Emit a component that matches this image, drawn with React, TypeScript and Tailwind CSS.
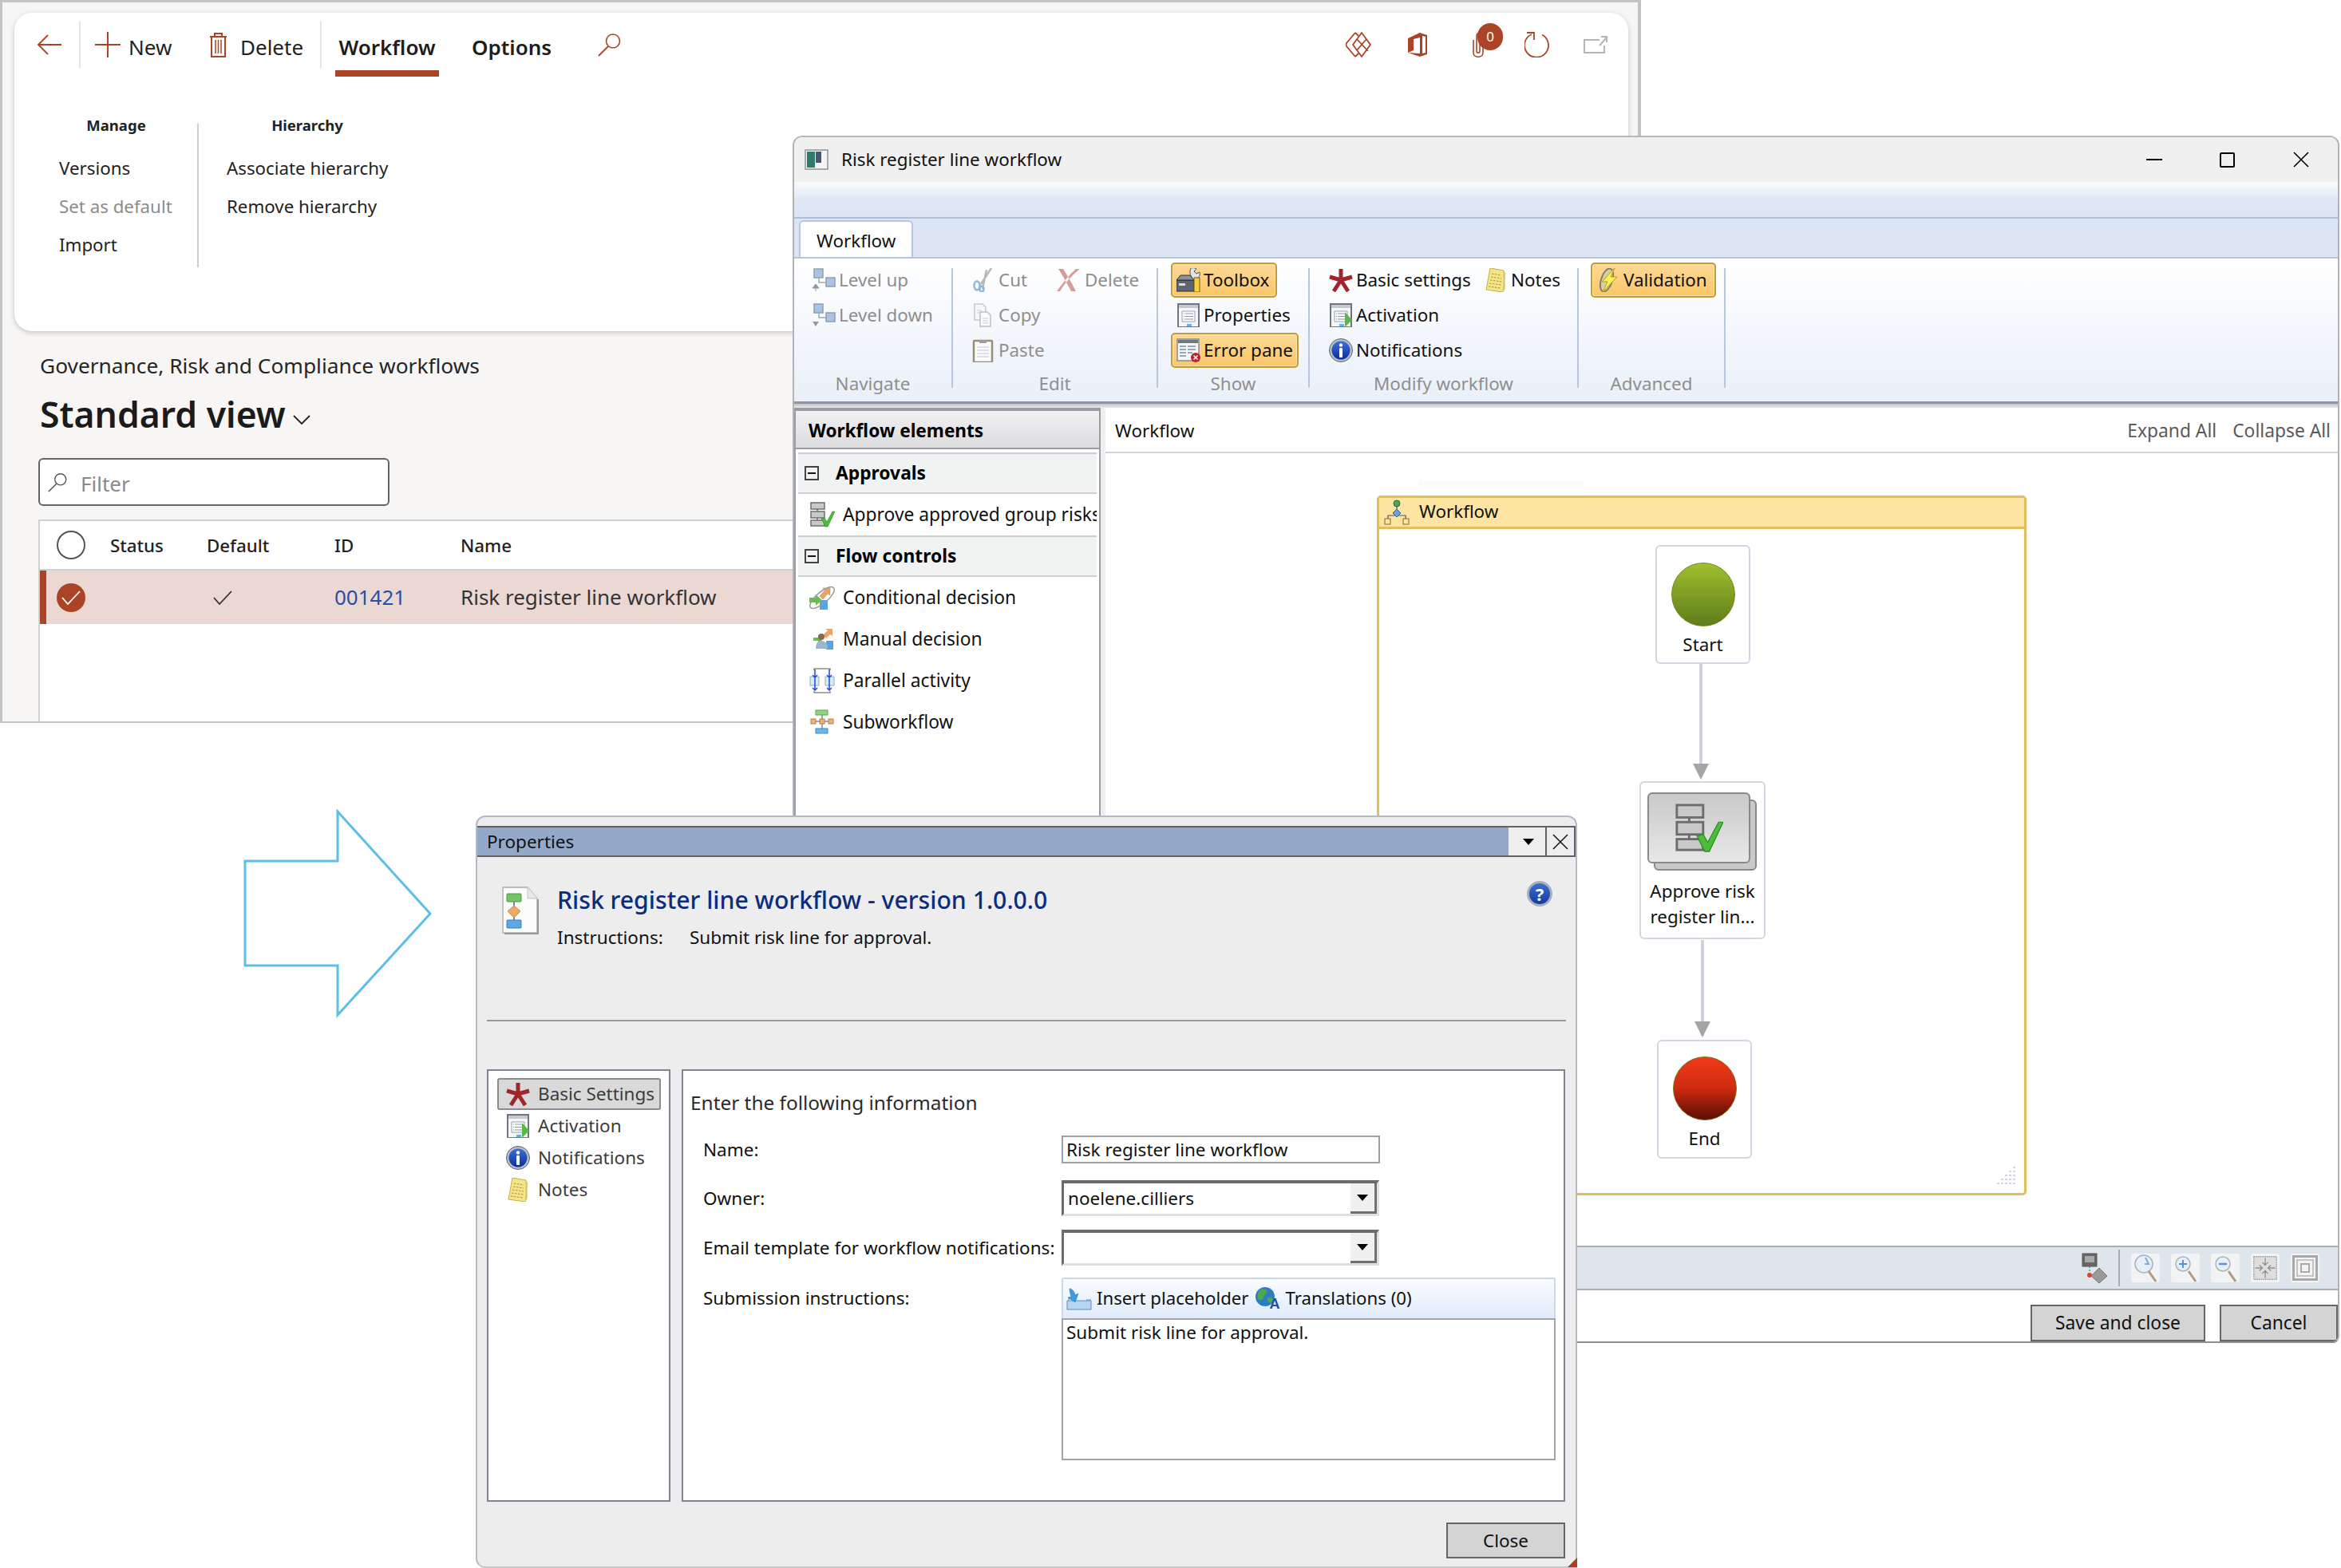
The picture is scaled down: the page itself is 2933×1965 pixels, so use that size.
import React from "react";

type IP = { className?: string };
const S = ({ children, className = "", vb = "0 0 30 30" }: { children: React.ReactNode; className?: string; vb?: string }) => (
  <svg viewBox={vb} className={`shrink-0 ${className}`} fill="none">{children}</svg>
);
const RED = "#ab4426";

const BackArrow = () => (
  <S vb="0 0 32 28" className="w-[32px] h-[28px]"><path d="M31 14H2M14 2 2 14l12 12" stroke={RED} strokeWidth="1.8" /></S>
);
const PlusI = () => (
  <S vb="0 0 32 32" className="w-[32px] h-[32px]"><path d="M16 0v32M0 16h32" stroke={RED} strokeWidth="2" /></S>
);
const TrashI = () => (
  <S vb="0 0 25 33" className="w-[25px] h-[33px]">
    <path d="M2 6h21M8 6V2h9v4M4 6v25h17V6" stroke={RED} strokeWidth="2" />
    <path d="M9 10v17M12.500 10v17M16 10v17" stroke={RED} strokeWidth="1.5" />
  </S>
);
const SearchI = ({ className = "w-[29px] h-[30px]", c = RED }: IP & { c?: string }) => (
  <S vb="0 0 29 30" className={className}>
    <circle cx="19" cy="10.500" r="8.500" stroke={c} strokeWidth="1.600" />
    <path d="M13 17 1 29" stroke={c} strokeWidth="1.800" />
  </S>
);
const DiamondI = () => (
  <S vb="0 0 32 32" className="w-[32px] h-[32px]">
    <path d="M12 1 1 14q-1 2 0 4l11 13 M12 1l4 4 M12 31l4-4" stroke={RED} strokeWidth="1.800" />
    <path d="M20 1 9 16l11 15 11-15zM14 9l14 15M26 9 14 23" stroke={RED} strokeWidth="1.800" strokeLinejoin="round" />
  </S>
);
const OfficeI = () => (
  <S vb="0 0 24 30" className="w-[24px] h-[30px]">
    <path d="M0 7 15 0l9 3v24l-9 3-15-5 15 1V6L7 8v14l-7 3z" fill={RED} />
    <path d="M18 4v22l4-1V5z" fill="#fff" />
  </S>
);
const ClipI = () => (
  <S vb="0 0 16 32" className="w-[16px] h-[32px]">
    <path d="M2 10v16c0 7 12 7 12 0V5c0-5-8-5-8 0v19c0 3 4 3 4 0V8" stroke={RED} strokeWidth="1.600" />
  </S>
);
const RefreshI = () => (
  <S vb="0 0 32 32" className="w-[32px] h-[32px]">
    <path d="M22 3.500A15 15 0 1 1 9 3" stroke={RED} strokeWidth="1.800" />
    <path d="M3 1h9v9" stroke={RED} strokeWidth="1.800" />
  </S>
);
const PopI = () => (
  <S vb="0 0 30 22" className="w-[30px] h-[22px]">
    <path d="M20 5H1v16h25V12" stroke="#b5b5b5" strokeWidth="2" />
    <path d="M20 12 29 2M22 1h7v7" stroke="#b5b5b5" strokeWidth="2" />
  </S>
);
const CheckLine = ({ c = "#333" }: { c?: string }) => (
  <S vb="0 0 24 18" className="w-[24px] h-[18px]"><path d="M1 9l7 8L23 1" stroke={c} strokeWidth="1.800" /></S>
);
const Chevron = () => (
  <S vb="0 0 22 12" className="w-[22px] h-[12px]"><path d="M1 1l10 10L21 1" stroke="#222" strokeWidth="1.800" /></S>
);

const TreeI = ({ down }: { down?: boolean }) => (
  <S vb="0 0 30 30" className="w-[30px] h-[30px] opacity-75">
    <rect x="3" y="1" width="11" height="11" fill="#8fb3dc" stroke="#6f7f94" strokeWidth="1.500" />
    <rect x="18" y="12" width="11" height="11" fill="#8fb3dc" stroke="#6f7f94" strokeWidth="1.500" />
    <path d="M9 12v6h9" stroke="#8a8a8a" strokeWidth="1.500" />
    {down ? <path d="M1 23h8l-4 6z" fill="#777" /> : <path d="M5 20l4 5H1zM5 25v4" stroke="#777" fill="#777" />}
  </S>
);
const CutI = () => (
  <S className="w-[30px] h-[30px] opacity-80">
    <path d="M25 0 12 20M19 2l-5 24" stroke="#a8a8a8" strokeWidth="2.500" />
    <ellipse cx="7" cy="22" rx="3.500" ry="5.500" stroke="#6fa5de" strokeWidth="2.500" />
    <ellipse cx="13" cy="26" rx="2.500" ry="3.500" stroke="#6fa5de" strokeWidth="2.500" />
  </S>
);
const RedXI = () => (
  <S vb="0 0 32 30" className="w-[32px] h-[30px]">
    <path d="M3 1c5 8 11 18 16 28h6C20 19 14 9 9 1zM30 1C20 9 11 19 5 29h-4C9 18 17 8 25 1z" fill="#d99a9a" />
  </S>
);
const CopyI = () => (
  <S className="w-[30px] h-[30px] opacity-70">
    <path d="M4 1h10l4 4v16H4z" fill="#f5f7fa" stroke="#b3b3b3" strokeWidth="1.500" />
    <path d="M11 11h9l4 4v14H11z" fill="#fbfbfb" stroke="#a8a8a8" strokeWidth="1.500" />
    <path d="M14 19h7M14 22h7M14 25h7M7 9h6M7 12h3" stroke="#bbb" />
  </S>
);
const PasteI = () => (
  <S className="w-[30px] h-[30px]">
    <rect x="3" y="3" width="23" height="27" rx="1" fill="#fafafa" stroke="#9c8d78" strokeWidth="2.500" />
    <path d="M10 2h9v4h-9z" fill="#9c9c9c" />
    <path d="M7 11h15M7 15h15M7 19h15M7 23h15" stroke="#c4c9d2" />
  </S>
);
const ToolboxI = () => (
  <S className="w-[30px] h-[30px]">
    <path d="M18 0c3-1 5 0 7 1l-3 3 3 3 4-2c1 4-1 8-5 8v6h-5v-8c-2-2-3-8-1-10z" fill="#e4e4e4" stroke="#444" strokeWidth=".9" />
    <path d="M0 15h22v14H0z" fill="#5d6670" stroke="#2e2e2e" />
    <path d="M0 15l5-6h12l5 6z" fill="#8a929b" stroke="#2e2e2e" />
    <rect x="3" y="19" width="8" height="3" fill="#dcdcdc" />
    <rect x="22" y="12" width="7" height="18" fill="#f7cf3f" stroke="#6f5f15" />
  </S>
);
const PropsI = ({ arrow }: { arrow?: boolean }) => (
  <S vb="1 0 28 30" className="w-[30px] h-[30px]">
    <rect x="2" y="1" width="26" height="29" fill="#f4f6f9" stroke="#6f7680" strokeWidth="2" />
    <rect x="3" y="2" width="24" height="4" fill="#c5cad1" />
    <path d="M7 10h16v13H7z" fill="#fff" stroke="#98a0aa" />
    <path d="M11 13h10M11 16.500h10M11 20h10" stroke="#8b95a5" />
    <path d="M9 13h1M9 16.500h1M9 20h1" stroke="#4aa0e0" />
    <rect x="13" y="26" width="6" height="3" fill="#5fb3ea" />
    {arrow && <path d="M20 11l9 10-9 9z" fill="#58b946" />}
  </S>
);
const ErrI = () => (
  <S className="w-[30px] h-[30px]">
    <rect x="1" y="1" width="27" height="27" fill="#f5f6f8" stroke="#8b8b8b" strokeWidth="1.500" />
    <rect x="2" y="2" width="25" height="4" fill="#6e7680" />
    <path d="M4 10h8M14 10h10M4 14h8M14 14h10M4 18h8M14 18h6M4 22h8" stroke="#7b8da8" strokeWidth="1.300" />
    <circle cx="24" cy="24" r="6" fill="#b8222a" />
    <path d="M21.500 21.500l5 5M26.500 21.500l-5 5" stroke="#fff" strokeWidth="1.500" />
  </S>
);
const StarI = () => (
  <S className="w-[30px] h-[30px]">
    <path d="M15 15V1M15 15 29 11M15 15 1 11M15 15 24 29M15 15 6 29" stroke="#a2252c" strokeWidth="5" />
  </S>
);
const NotesI = () => (
  <S className="w-[30px] h-[30px]">
    <path d="M8 0 25 3 26 25 24 30 3 27z" fill="#f6e487" stroke="#c7ad44" />
    <path d="M24 30l1-26 2 2-1 19z" fill="#d8c161" />
    <path d="M10 7 22 9M9 11 22 13M8 15 22 17M7 19 22 21M6 23 21 25" stroke="#a4903e" strokeDasharray="2.500 1.500" />
  </S>
);
const InfoI = ({ id }: { id: string }) => (
  <S className="w-[30px] h-[30px]">
    <defs>
      <linearGradient id={id} x1="0" y1="0" x2="0" y2="1"><stop offset="0" stopColor="#3b6fd8" /><stop offset="1" stopColor="#0d2f9c" /></linearGradient>
    </defs>
    <circle cx="15" cy="15" r="14.500" fill="#b9bec8" stroke="#5c6470" />
    <circle cx="15" cy="15" r="11.500" fill={`url(#${id})`} />
    <circle cx="15" cy="8.500" r="2.200" fill="#fff" />
    <rect x="13" y="12" width="4" height="12" rx="1" fill="#fff" />
  </S>
);
const ValidI = () => (
  <S className="w-[30px] h-[30px]">
    <ellipse cx="13" cy="15" rx="7" ry="15" transform="rotate(18 13 15)" fill="#d9cfa4" stroke="#85806a" strokeWidth="2" />
    <path d="M23 0 7 17h7L8 30 26 11h-8z" fill="#fdf14e" stroke="#b89c1c" />
  </S>
);
const ApproveI = ({ className = "w-[32px] h-[32px]" }: IP) => (
  <S vb="0 0 32 32" className={className}>
    <rect x="2" y="1" width="17" height="8" fill="#c9c9c9" stroke="#6d6d6d" strokeWidth="1.500" />
    <rect x="2" y="12" width="17" height="8" fill="#c9c9c9" stroke="#6d6d6d" strokeWidth="1.500" />
    <rect x="2" y="23" width="17" height="7" fill="#c9c9c9" stroke="#6d6d6d" strokeWidth="1.500" />
    <path d="M10 9v3M10 20v3" stroke="#6d6d6d" strokeWidth="1.500" />
    <path d="M15 21l4-1 3 5 7-13h3l-9 19h-3z" fill="#4cbc3a" stroke="#2b8a25" strokeWidth=".6" />
  </S>
);
const CondI = () => (
  <S vb="0 0 32 32" className="w-[32px] h-[32px] overflow-visible">
    <rect x="13" y="19" width="10" height="12" fill="#4fa6e8" />
    <path d="M13 14 20 6l-3-2h9v9l-3-2-6 7z" fill="#e5a76b" stroke="#c88747" strokeWidth=".6" />
    <path d="M0 16h8v-4l8 7-8 7v-4H0z" fill="#68bd51" />
    <ellipse cx="16" cy="16" rx="19" ry="7" transform="rotate(-40 16 16)" stroke="#9b9b9b" strokeWidth="1.500" />
  </S>
);
const ManualI = () => (
  <S vb="0 0 32 32" className="w-[32px] h-[32px]">
    <path d="M5 14h6v-3l6 5-6 5v-3H5z" fill="#68bd51" />
    <path d="M17 11l6-6-3-2h9v9l-3-2-5 5z" fill="#e5a76b" />
    <rect x="21" y="18" width="9" height="11" fill="#4fa6e8" />
    <circle cx="15" cy="13" r="4" fill="#8a6a48" />
    <path d="M8 28c0-8 4-10 7-10s8 2 8 10z" fill="#9bb4cf" />
  </S>
);
const ParaI = () => (
  <S vb="0 0 32 32" className="w-[32px] h-[32px]">
    <path d="M6 3V1h20v2M6 29v2h20v-2" stroke="#8c8c8c" strokeWidth="1.500" />
    <rect x="1" y="11" width="11" height="11" fill="#d6ecf7" stroke="#9ab" />
    <rect x="20" y="11" width="11" height="11" fill="#d6ecf7" stroke="#9ab" />
    <path d="M7 2v26M25 2v26M4 9l3 3 3-3M22 9l3 3 3-3M4 25l3 3 3-3M22 25l3 3 3-3" stroke="#1f47d6" strokeWidth="1.500" />
  </S>
);
const SubI = () => (
  <S vb="0 0 32 32" className="w-[32px] h-[32px]">
    <path d="M16 6v20M6 15h20" stroke="#7d8a94" strokeWidth="1.500" />
    <rect x="8" y="1" width="15" height="6" fill="#8fd37b" stroke="#5ea64c" />
    <rect x="2" y="12" width="6" height="6" fill="#e9b27e" stroke="#bb804b" />
    <rect x="13" y="12" width="6" height="6" fill="#e9b27e" stroke="#bb804b" />
    <rect x="24" y="12" width="6" height="6" fill="#e9b27e" stroke="#bb804b" />
    <rect x="8" y="24" width="15" height="6" fill="#6db6ec" stroke="#3f89c9" />
  </S>
);
const WfI = () => (
  <S vb="0 0 32 32" className="w-[32px] h-[32px]">
    <path d="M16 8v8M5 25v-5h22v5" stroke="#555" strokeWidth="1.200" />
    <circle cx="16" cy="5" r="4" fill="#4aa85a" stroke="#2b6a36" />
    <path d="M16 12l5 5-5 5-5-5z" fill="#6f9fe0" stroke="#3a5f9e" />
    <rect x="1" y="24" width="7" height="7" fill="#fde4a0" stroke="#8a6a20" />
    <rect x="24" y="24" width="7" height="7" fill="#fde4a0" stroke="#8a6a20" />
  </S>
);
const DocI = () => (
  <S vb="0 0 47 60" className="w-[47px] h-[60px]">
    <path d="M2 1h31l12 14v43H2z" fill="#fbfbfb" stroke="#bdbdbd" strokeWidth="1.800" />
    <path d="M33 1v14h12" fill="#e8e8e8" stroke="#c4c4c4" />
    <path d="M4 59h42V16" stroke="#9a9a9a" strokeWidth="2" />
    <path d="M16 16v30" stroke="#7a8fa0" strokeWidth="2" />
    <rect x="7" y="9" width="18" height="10" rx="1" fill="#74c466" stroke="#4c9b40" />
    <path d="M16 24l8 7-8 8-8-8z" fill="#eeaa66" stroke="#cc8844" />
    <rect x="7" y="42" width="18" height="10" rx="1" fill="#5ea9e4" stroke="#3a7fb8" />
  </S>
);
const InsertI = () => (
  <S vb="0 0 32 28" className="w-[32px] h-[28px]">
    <path d="M1 16h30v11H1z" fill="#b9d4ee" stroke="#5b8fc3" />
    <path d="M3 16v-3h5M25 15h6" stroke="#5b8fc3" />
    <path d="M4 1c3 0 6 3 7 8l4-2-4 11-9-6 4-1C5 7 4 4 4 1z" fill="#3d9be0" stroke="#2a78b8" strokeWidth=".6" />
  </S>
);
const GlobeI = () => (
  <div className="relative w-[33px] h-[32px] shrink-0">
    <S vb="0 0 33 32" className="w-[33px] h-[32px]">
      <circle cx="13" cy="13" r="12" fill="#2e7cc4" />
      <path d="M6 5c4-2 8-2 9 1s-3 4-4 8-6 4-7 1 0-8 2-10zM17 14c3-1 6 0 6 3s-3 5-5 3-3-5-1-6z" fill="#4aa84e" />
    </S>
    <span className="absolute left-[18px] top-[12px] text-[18px] leading-[20px] font-bold text-[#1d4fa8] font-['Liberation_Sans',sans-serif]">A</span>
  </div>
);
const Tri = () => (
  <S vb="0 0 14 8" className="w-[14px] h-[8px]"><path d="M0 0h14L7 8z" fill="#000" /></S>
);
const FlowMini = () => (
  <S vb="0 0 32 40" className="w-[32px] h-[40px]">
    <rect x="1" y="2" width="18" height="16" fill="#666" stroke="#555" />
    <rect x="4" y="5" width="12" height="8" fill="#aaa" />
    <path d="M10 18v8" stroke="#555" strokeDasharray="2 2" />
    <circle cx="10" cy="29" r="3" fill="#e3402a" />
    <path d="M22 20l10 10-10 9-10-9z" fill="#9a9a9a" stroke="#777" />
  </S>
);
const Lens = ({ mode }: { mode: "reset" | "plus" | "minus" }) => (
  <div className="w-[36px] h-[36px] bg-[#f2f3f4] rounded-[3px] flex items-center justify-center">
    <S vb="0 0 36 36" className="w-[36px] h-[36px]">
      <circle cx={mode === "reset" ? 16 : 15} cy="13" r={mode === "reset" ? 11 : 9} fill="#e6f0fa" stroke="#a8b3bd" strokeWidth="1.500" />
      <path d="M22 22l9 13" stroke="#b39a80" strokeWidth="3" />
      {mode === "plus" && <path d="M15 8v10M10 13h10" stroke="#5b90d4" strokeWidth="2" />}
      {mode === "minus" && <path d="M10 13h10" stroke="#5b90d4" strokeWidth="2.500" />}
      {mode === "reset" && <path d="M18 5l4 8-5 0" stroke="#7fa8d8" strokeWidth="2" />}
    </S>
  </div>
);
const FitI = () => (
  <div className="w-[36px] h-[36px] bg-[#f2f3f4] rounded-[3px] flex items-center justify-center">
    <S vb="0 0 36 36" className="w-[32px] h-[32px]">
      <rect x="2" y="2" width="32" height="32" fill="#dedede" stroke="#a3a3a3" strokeWidth="1.500" strokeDasharray="2 1" />
      <path d="M18 4v10M18 32V22M4 18h10M32 18H22M14 10l4 4 4-4M14 26l4-4 4 4M10 14l4 4-4 4M26 14l-4 4 4 4" stroke="#909090" strokeWidth="1.500" />
    </S>
  </div>
);
const FrameI = () => (
  <div className="w-[36px] h-[36px] bg-[#f2f3f4] rounded-[3px] flex items-center justify-center">
    <div className="w-[32px] h-[32px] border-[3px] border-[#a9a9a9] flex items-center justify-center">
      <div className="w-[22px] h-[22px] border-[2px] border-[#c4c4c4] flex items-center justify-center">
        <div className="w-[12px] h-[12px] border-[2px] border-[#a9a9a9]" />
      </div>
    </div>
  </div>
);
const Grip = () => (
  <S vb="0 0 24 24" className="w-[24px] h-[24px]">
    {[[20, 2], [20, 7], [15, 7], [20, 12], [15, 12], [10, 12], [20, 17], [15, 17], [10, 17], [5, 17], [20, 22], [15, 22], [10, 22], [5, 22], [0, 22]].map(([x, y], i) => (
      <rect key={i} x={x} y={y} width="3" height="2" fill="#d3d4e2" />
    ))}
  </S>
);

/* ---------- background page ---------- */
const PageWindow = () => (
  <div className="absolute left-0 top-0 w-[2056px] h-[906px] bg-[#f7f6f4] border-t-[3px] border-l-[3px] border-r-[4px] border-b-[2px] border-[#c4c4c4] flex flex-col overflow-hidden text-[#222]">
    <div className="ml-[15px] mt-[13px] w-[2022px] h-[399px] shrink-0 bg-white rounded-[22px] shadow-[0_2px_6px_rgba(0,0,0,0.2)] flex flex-col">
      <div className="flex h-[80px] shrink-0 pt-[10px] items-start text-[26px] leading-[60px]">
        <div className="ml-[28px] h-[60px] flex items-center"><BackArrow /></div>
        <div className="ml-[21px] w-[2px] h-[60px] bg-[#e6e6e6]" />
        <div className="ml-[18px] h-[60px] flex items-center"><PlusI /></div>
        <div className="ml-[10px] w-[55px] whitespace-nowrap mt-[3px]">New</div>
        <div className="ml-[45px] h-[60px] flex items-center"><TrashI /></div>
        <div className="ml-[15px] w-[78px] whitespace-nowrap mt-[3px]">Delete</div>
        <div className="ml-[22px] w-[2px] h-[60px] bg-[#e6e6e6]" />
        <div className="ml-[17px] w-[130px] h-[70px] border-b-[8px] border-[#ab4426] text-center font-semibold text-[#1d1d1d] whitespace-nowrap pt-[3px]">Workflow</div>
        <div className="ml-[41px] w-[100px] font-semibold text-[#1d1d1d] whitespace-nowrap mt-[3px]">Options</div>
        <div className="ml-[58px] h-[60px] flex items-center"><SearchI /></div>
        <div className="ml-auto mr-[26px] h-[60px] flex items-center">
          <DiamondI />
          <div className="ml-[46px]"><OfficeI /></div>
          <div className="ml-[56px] relative">
            <ClipI />
            <div className="absolute left-[7px] top-[-11px] w-[32px] h-[34px] rounded-full bg-[#ab4426] text-white text-[17px] leading-[33px] text-center">0</div>
          </div>
          <div className="ml-[50px]"><RefreshI /></div>
          <div className="ml-[42px]"><PopI /></div>
        </div>
      </div>
      <div className="flex items-start text-[22.300px]">
        <div className="ml-[56px] w-[143px] mt-[46px] flex flex-col">
          <div className="h-[30px] leading-[30px] text-center text-[18.500px] font-bold text-[#222]">Manage</div>
          <div className="mt-[15px] h-[48px] leading-[48px]">Versions</div>
          <div className="h-[48px] leading-[48px] text-[#8c8c8c] whitespace-nowrap">Set as default</div>
          <div className="h-[48px] leading-[48px]">Import</div>
        </div>
        <div className="ml-[30px] mt-[59px] w-[2px] h-[180px] bg-[#cfcfcf]" />
        <div className="ml-[35px] w-[202px] mt-[46px] flex flex-col">
          <div className="h-[30px] leading-[30px] text-center text-[18.500px] font-bold text-[#222]">Hierarchy</div>
          <div className="mt-[15px] h-[48px] leading-[48px] whitespace-nowrap">Associate hierarchy</div>
          <div className="h-[48px] leading-[48px] whitespace-nowrap">Remove hierarchy</div>
        </div>
      </div>
    </div>
    <div className="pl-[45px] flex flex-col flex-1 min-h-0">
      <div className="ml-[2px] mt-[25px] h-[36px] leading-[36px] text-[26.300px] text-[#252525] whitespace-nowrap">Governance, Risk and Compliance workflows</div>
      <div className="ml-[2px] mt-[15px] h-[56px] flex items-center">
        <div className="text-[44.500px] font-semibold leading-[56px] text-[#1b1b1b] whitespace-nowrap">Standard view</div>
        <div className="ml-[9px] mt-[14px]"><Chevron /></div>
      </div>
      <div className="mt-[27px] w-[440px] h-[60px] shrink-0 bg-white border-[2px] border-[#666] rounded-[6px] flex items-center">
        <div className="ml-[10px]"><SearchI className="w-[24px] h-[25px]" c="#555" /></div>
        <div className="ml-[17px] mt-[5px] text-[26px] text-[#8a8a8a]">Filter</div>
      </div>
      <div className="mt-[17px] flex-1 min-h-0 bg-white border-t-[2px] border-l-[2px] border-[#d0d0d0] text-[22.300px]">
        <div className="grid grid-cols-[88px_121px_160px_158px_1fr] h-[62px] border-b-[2px] border-[#d0d0d0] items-center font-medium text-[#222] leading-[34px]">
          <div className="ml-[21px] w-[36px] h-[36px] rounded-full border-[2px] border-[#555] bg-white" />
          <div className="pt-[2px]">Status</div>
          <div className="pt-[2px]">Default</div>
          <div className="pt-[2px]">ID</div>
          <div className="pt-[2px]">Name</div>
        </div>
        <div className="grid grid-cols-[88px_121px_160px_158px_1fr] h-[67px] bg-[#ecd8d3] items-center text-[26px]">
          <div className="h-full flex items-center border-l-[8px] border-[#ab4426]">
            <div className="ml-[13px] w-[36px] h-[36px] rounded-full bg-[#ab4426] flex items-center justify-center"><CheckLine c="#fff" /></div>
          </div>
          <div />
          <div className="pl-[8px]"><CheckLine /></div>
          <div className="text-[#2a4ea6]">001421</div>
          <div className="text-[#333] whitespace-nowrap">Risk register line workflow</div>
        </div>
      </div>
    </div>
  </div>
);

/* ---------- workflow designer window ---------- */
const RB = ({ icon, text, dim, w }: { icon: React.ReactNode; text: string; dim?: boolean; w?: string }) => (
  <div className={`flex items-center h-[44px] whitespace-nowrap ${dim ? "text-[#8e8e8e]" : "text-[#111]"} ${w ?? ""}`}>
    {icon}
    <span className="ml-[4px] mb-[1px]">{text}</span>
  </div>
);
const HB = ({ icon, text, w }: { icon: React.ReactNode; text: string; w: string }) => (
  <div className={`flex items-center h-[44px] whitespace-nowrap rounded-[5px] border-[2px] border-[#c29c3c] bg-gradient-to-b from-[#fbd896] to-[#fcc765] shadow-[inset_0_0_0_1px_#fde2ae] pl-[5px] text-[#111] ${w}`}>
    {icon}
    <span className="ml-[4px] mb-[1px]">{text}</span>
  </div>
);
const GroupSep = () => <div className="w-[2px] h-[150px] mt-[12px] bg-[#b6c7de] shrink-0" />;
const Group = ({ w, pl, label, children }: { w: string; pl: string; label: string; children: React.ReactNode }) => (
  <div className={`flex flex-col shrink-0 pt-[5px] ${w}`}>
    <div className={`h-[132px] ${pl}`}>{children}</div>
    <div className="h-[40px] leading-[39px] text-center text-[#8f8f8f] whitespace-nowrap">{label}</div>
  </div>
);

const GroupHead = ({ label }: { label: string }) => (
  <div className="mx-[3px] h-[52px] shrink-0 bg-[#f1f3f3] border-y-[2px] border-[#cdced6] flex items-center pl-[8px]">
    <div className="w-[18px] h-[18px] border-[2px] border-[#444] flex items-center justify-center"><div className="w-[10px] h-[2px] bg-[#111]" /></div>
    <div className="ml-[21px] font-bold text-[#000]">{label}</div>
  </div>
);
const ElemRow = ({ icon, label }: { icon: React.ReactNode; label: string }) => (
  <div className="mx-[3px] h-[52px] shrink-0 flex items-center pl-[14px] whitespace-nowrap overflow-hidden">
    {icon}
    <span className="ml-[10px]">{label}</span>
  </div>
);
const DiagramBox = ({ pos, children }: { pos: string; children: React.ReactNode }) => (
  <div className={`absolute bg-white border-[2px] border-[#d2d7e3] rounded-[6px] flex flex-col items-center ${pos}`}>{children}</div>
);

const DesignerWindow = () => (
  <div className="absolute left-[993px] top-[170px] w-[1938px] h-[1513px] bg-white border-x-[2px] border-t-[2px] border-b-[2px] border-x-[#b0b4ba] border-t-[#b8b8b8] border-b-[#8d8d8d] rounded-t-[12px] rounded-b-[8px] flex flex-col overflow-hidden text-[22.400px] text-[#111]">
    <div className="h-[56px] shrink-0 bg-[#f0f0f0] flex items-center">
      <S vb="0 0 30 26" className="ml-[13px] w-[30px] h-[26px]">
        <rect x="1" y="1" width="28" height="24" fill="#f4f4f4" stroke="#8d9296" strokeWidth="1.500" />
        <rect x="3" y="3" width="10" height="20" fill="#2f7a6a" />
        <rect x="14" y="3" width="7" height="14" fill="#445a6a" />
      </S>
      <div className="ml-[16px] mb-[1px] whitespace-nowrap">Risk register line workflow</div>
      <div className="ml-auto flex items-center">
        <div className="w-[20px] h-[2px] bg-black" />
        <div className="ml-[72px] w-[19px] h-[19px] border-[2px] border-black rounded-[2px]" />
        <S vb="0 0 20 20" className="ml-[73px] w-[20px] h-[20px] mr-[36px]"><path d="M1 1l18 18M19 1 1 19" stroke="#000" strokeWidth="1.600" /></S>
      </div>
    </div>
    <div className="h-[44px] shrink-0 bg-gradient-to-b from-[#fafbfe] via-[#dfe8f4] to-[#dce6f3]" />
    <div className="h-[2px] shrink-0 bg-[#b0bfd6]" />
    <div className="h-[48px] shrink-0 bg-[#dce5f3] flex items-end pl-[6px]">
      <div className="w-[143px] h-[46px] bg-white border-x-[2px] border-t-[2px] border-[#b8c7dd] rounded-t-[6px] pl-[20px] leading-[47px]">Workflow</div>
    </div>
    <div className="h-[2px] shrink-0 bg-[#b4c4dc]" />
    <div className="h-[179px] shrink-0 bg-gradient-to-b from-white to-[#e9f0f9] flex overflow-hidden">
      <Group w="w-[197px]" pl="pl-[22px]" label="Navigate">
        <RB dim icon={<TreeI />} text="Level up" />
        <RB dim icon={<TreeI down />} text="Level down" />
      </Group>
      <GroupSep />
      <Group w="w-[255px]" pl="pl-[23px]" label="Edit">
        <div className="flex">
          <RB dim icon={<CutI />} text="Cut" w="w-[106px]" />
          <RB dim icon={<RedXI />} text="Delete" />
        </div>
        <RB dim icon={<CopyI />} text="Copy" />
        <RB dim icon={<PasteI />} text="Paste" />
      </Group>
      <GroupSep />
      <Group w="w-[188px]" pl="pl-[16px]" label="Show">
        <HB icon={<ToolboxI />} text="Toolbox" w="w-[133px]" />
        <div className="pl-[7px]"><RB icon={<PropsI />} text="Properties" /></div>
        <HB icon={<ErrI />} text="Error pane" w="w-[160px]" />
      </Group>
      <GroupSep />
      <Group w="w-[335px]" pl="pl-[24px]" label="Modify workflow">
        <div className="flex">
          <RB icon={<StarI />} text="Basic settings" w="w-[194px]" />
          <RB icon={<NotesI />} text="Notes" />
        </div>
        <RB icon={<PropsI arrow />} text="Activation" />
        <RB icon={<InfoI id="ribInfo" />} text="Notifications" />
      </Group>
      <GroupSep />
      <Group w="w-[182px]" pl="pl-[15px]" label="Advanced">
        <HB icon={<ValidI />} text="Validation" w="w-[157px]" />
      </Group>
      <GroupSep />
    </div>
    <div className="h-[3px] shrink-0 bg-[#8b97a6]" />
    <div className="h-[5px] shrink-0 bg-gradient-to-b from-[#bfc2c8] to-[#e9eaec]" />
    <div className="h-[1050px] shrink-0 flex">
      <div className="w-[384px] shrink-0 border-l-[2px] border-r-[2px] border-t-[4px] border-[#9a9ea4] bg-white flex flex-col text-[22.800px]">
        <div className="h-[48px] shrink-0 border-b-[2px] border-[#9a9ea4] bg-gradient-to-b from-[#f1f1f3] to-[#dcdcdf] pl-[16px] leading-[50px] text-[22.600px] font-bold text-[#000]">Workflow elements</div>
        <div className="h-[4px] shrink-0" />
        <GroupHead label="Approvals" />
        <ElemRow icon={<ApproveI />} label="Approve approved group risks" />
        <GroupHead label="Flow controls" />
        <ElemRow icon={<CondI />} label="Conditional decision" />
        <ElemRow icon={<ManualI />} label="Manual decision" />
        <ElemRow icon={<ParaI />} label="Parallel activity" />
        <ElemRow icon={<SubI />} label="Subworkflow" />
      </div>
      <div className="w-[6px] shrink-0 bg-[#efefef]" />
      <div className="flex-1 min-w-0 flex flex-col">
        <div className="h-[57px] shrink-0 border-b-[2px] border-[#cfd4e0] flex items-center justify-between pl-[12px] pr-[9px] pt-[3px]">
          <div>Workflow</div>
          <div className="flex text-[#5a5a5a] text-[22.800px]">
            <span className="whitespace-nowrap">Expand All</span>
            <span className="ml-[20px] whitespace-nowrap">Collapse All</span>
          </div>
        </div>
        <div className="relative flex-1 min-h-0 overflow-hidden">
          <div className="absolute left-[392px] top-[35px] w-[207px] h-[6px] bg-[#fbfaf8]" />
          <div className="absolute left-[340px] top-[53px] w-[814px] h-[877px] border-[3px] border-[#e3be5e] rounded-[5px]">
            <div className="h-[39px] bg-[#fde4a0] border-b-[3px] border-[#e3be5e] flex items-center pl-[6px]">
              <WfI />
              <span className="ml-[12px] mb-[2px]">Workflow</span>
            </div>
            <DiagramBox pos="left-[346px] top-[59px] w-[119px] h-[149px]">
              <div className="mt-[20px] w-[80px] h-[80px] rounded-full bg-gradient-to-b from-[#9fc02f] to-[#5f7d1b] border border-[#6f8a20]" />
              <div className="mt-[6px] leading-[34px]">Start</div>
            </DiagramBox>
            <div className="absolute left-[401px] top-[208px] w-[4px] h-[126px] bg-[#cdd2de]" />
            <S vb="0 0 20 20" className="absolute left-[393px] top-[333px] w-[20px] h-[20px]"><path d="M0 0h20L10 20z" fill="#a5a5a5" /></S>
            <DiagramBox pos="left-[326px] top-[355px] w-[158px] h-[198px]">
              <div className="relative mt-[12px] ml-[-2px] w-[137px] h-[98px]">
                <div className="absolute left-[8px] top-[9px] w-[129px] h-[89px] bg-[#c9c9c9] border-[2px] border-[#8a8a8a] rounded-[6px]" />
                <div className="absolute left-0 top-0 w-[129px] h-[89px] bg-gradient-to-b from-[#c9c9c9] to-[#e8e8e8] border-[2px] border-[#8a8a8a] rounded-[6px] flex items-center justify-center">
                  <ApproveI className="w-[62px] h-[62px]" />
                </div>
              </div>
              <div className="mt-[10px] leading-[32px] text-center whitespace-nowrap">Approve risk<br />register lin...</div>
            </DiagramBox>
            <div className="absolute left-[403px] top-[554px] w-[4px] h-[120px] bg-[#cdd2de]" />
            <S vb="0 0 20 20" className="absolute left-[395px] top-[656px] w-[20px] h-[20px]"><path d="M0 0h20L10 20z" fill="#a5a5a5" /></S>
            <DiagramBox pos="left-[348px] top-[679px] w-[119px] h-[149px]">
              <div className="mt-[19px] w-[80px] h-[80px] rounded-full bg-gradient-to-b from-[#f03a18] via-[#cf2a10] to-[#5c0d05] border border-[#7c6a10]" />
              <div className="mt-[6px] leading-[34px]">End</div>
            </DiagramBox>
            <div className="absolute right-[10px] bottom-[11px]"><Grip /></div>
          </div>
        </div>
      </div>
    </div>
    <div className="h-[56px] shrink-0 bg-[#dfe5ec] border-y-[2px] border-[#a9aeb4] flex items-center justify-end pr-[23px]">
      <FlowMini />
      <div className="ml-[14px] mr-[14px] w-[2px] h-[46px] bg-[#a9aeb4]" />
      <Lens mode="reset" />
      <div className="ml-[14px]"><Lens mode="plus" /></div>
      <div className="ml-[14px]"><Lens mode="minus" /></div>
      <div className="ml-[14px]"><FitI /></div>
      <div className="ml-[14px]"><FrameI /></div>
    </div>
    <div className="flex-1 min-h-0 flex items-end justify-end text-[22.800px] leading-[42px]">
      <div className="w-[219px] h-[46px] bg-[#d4d4d4] border-[2px] border-[#666] text-center whitespace-nowrap">Save and close</div>
      <div className="ml-[18px] w-[148px] h-[46px] bg-[#d4d4d4] border-[2px] border-[#666] text-center">Cancel</div>
    </div>
  </div>
);

/* ---------- properties dialog ---------- */
const NavItem = ({ icon, label, sel }: { icon: React.ReactNode; label: string; sel?: boolean }) => (
  <div className={`ml-[11px] w-[205px] h-[40px] flex items-center pl-[9px] whitespace-nowrap text-[#3c3c3c] rounded-[3px] border-[2px] ${sel ? "bg-[#d9d9d9] border-[#8c8c8c]" : "border-transparent"}`}>
    {icon}
    <span className="ml-[10px]">{label}</span>
  </div>
);
const Combo = ({ value }: { value?: string }) => (
  <div className="w-[398px] h-[45px] border-t-[4px] border-l-[3px] border-t-[#6b6b6b] border-l-[#6b6b6b] border-b-[3px] border-r-[3px] border-b-[#e0e0e0] border-r-[#e0e0e0] flex items-center bg-white">
    <span className="ml-[5px] flex-1">{value}</span>
    <div className="w-[33px] h-full bg-[#f0f0f0] border-r-[3px] border-b-[3px] border-[#707070] flex items-center justify-center"><Tri /></div>
  </div>
);
const FormRow = ({ label, mt, h, children }: { label: string; mt: string; h: string; children: React.ReactNode }) => (
  <div className={`flex items-center ${mt} ${h}`}>
    <div className="pl-[25px] w-[474px] shrink-0 whitespace-nowrap">{label}</div>
    {children}
  </div>
);

const PropertiesWindow = () => (
  <div className="absolute left-[596px] top-[1022px] w-[1380px] h-[943px] bg-[#ededed] border-x-[2px] border-t-[2px] border-b-[2px] border-x-[#b4bac4] border-t-[#b4bac4] border-b-[#c8c8c8] rounded-t-[12px] rounded-bl-[12px] flex flex-col text-[22.500px] text-[#111]">
    <div className="mt-[11px] h-[39px] shrink-0 border-y-[2px] border-[#5f6368] flex">
      <div className="flex-1 bg-[#94a9c9] pl-[12px] leading-[35px] whitespace-nowrap">Properties</div>
      <div className="w-[46px] pl-[4px] bg-[#eeeeee] flex items-center justify-center"><Tri /></div>
      <div className="w-[38px] bg-[#eeeeee] border-x-[2px] border-[#5f6368] flex items-center justify-center">
        <S vb="0 0 20 20" className="w-[20px] h-[20px]"><path d="M1 1l18 18M19 1 1 19" stroke="#111" strokeWidth="1.500" /></S>
      </div>
    </div>
    <div className="h-[204px] shrink-0 flex items-start">
      <div className="ml-[30px] mt-[37px]"><DocI /></div>
      <div className="ml-[23px] flex flex-col">
        <div className="mt-[34px] h-[40px] leading-[40px] text-[30.200px] font-medium text-[#0c2c7c] whitespace-nowrap">Risk register line workflow - version 1.0.0.0</div>
        <div className="mt-[12px] h-[30px] leading-[30px] flex whitespace-nowrap">
          <span className="w-[166px]">Instructions:</span>
          <span>Submit risk line for approval.</span>
        </div>
      </div>
      <div className="ml-auto mr-[29px] mt-[30px] w-[32px] h-[32px] rounded-full bg-gradient-to-b from-[#3f6fd4] to-[#143a9e] border-[3px] border-[#a9afbb] text-white text-[22px] font-bold leading-[26px] text-center">?</div>
    </div>
    <div className="ml-[12px] mr-[12px] h-[2px] shrink-0 bg-[#9a9a9a]" />
    <div className="ml-[12px] mt-[60px] flex h-[542px] shrink-0">
      <div className="w-[230px] bg-white border-[2px] border-[#7d8590] pt-[9px]">
        <NavItem sel icon={<StarI />} label="Basic Settings" />
        <NavItem icon={<PropsI arrow />} label="Activation" />
        <NavItem icon={<InfoI id="navInfo" />} label="Notifications" />
        <NavItem icon={<NotesI />} label="Notes" />
      </div>
      <div className="ml-[14px] w-[1107px] bg-white border-[2px] border-[#7d8590]">
        <div className="ml-[9px] mt-[25px] h-[30px] leading-[30px] text-[#2a2a2a] whitespace-nowrap text-[24.400px]">Enter the following information</div>
        <FormRow label="Name:" mt="mt-[26px]" h="h-[35px]">
          <div className="w-[399px] h-[35px] border-[2px] border-[#a0a0a0] pl-[4px] leading-[31px] whitespace-nowrap">Risk register line workflow</div>
        </FormRow>
        <FormRow label="Owner:" mt="mt-[21px]" h="h-[45px]"><Combo value="noelene.cilliers" /></FormRow>
        <FormRow label="Email template for workflow notifications:" mt="mt-[17px]" h="h-[45px]"><Combo /></FormRow>
        <FormRow label="Submission instructions:" mt="mt-[15px]" h="h-[51px]">
          <div className="w-[619px] h-[51px] border-[2px] border-b-0 border-[#c8d8ee] rounded-t-[3px] bg-gradient-to-b from-[#fafcff] to-[#e0ebfb] flex items-center pl-[4px] whitespace-nowrap text-[22.200px]">
            <InsertI />
            <span className="ml-[6px] mb-[1px]">Insert placeholder</span>
            <div className="ml-[8px]"><GlobeI /></div>
            <span className="ml-[5px] mb-[1px]">Translations (0)</span>
          </div>
        </FormRow>
        <div className="ml-[474px] w-[619px] h-[178px] border-[2px] border-[#a0a4ac] pl-[4px] leading-[32px]">Submit risk line for approval.</div>
      </div>
    </div>
    <div className="mt-[26px] mr-[13px] flex justify-end">
      <div className="w-[149px] h-[45px] bg-[#d4d4d4] border-[2px] border-[#666] flex items-center justify-center">Close</div>
    </div>
    <S vb="0 0 12 12" className="absolute right-[-2px] bottom-[-1px] w-[12px] h-[12px]"><path d="M12 0v12H0z" fill="#a8402a" /></S>
  </div>
);

const BigArrow = () => (
  <S vb="0 0 240 262" className="absolute left-[303px] top-[1014px] w-[240px] h-[262px]">
    <path d="M4 65h116V3l116 128-116 127v-62H4z" stroke="#5cbfe8" strokeWidth="3" />
  </S>
);

export default function App() {
  return (
    <div className="relative w-[2933px] h-[1965px] bg-white overflow-hidden font-['Noto_Sans',sans-serif]">
      <PageWindow />
      <BigArrow />
      <DesignerWindow />
      <PropertiesWindow />
    </div>
  );
}
